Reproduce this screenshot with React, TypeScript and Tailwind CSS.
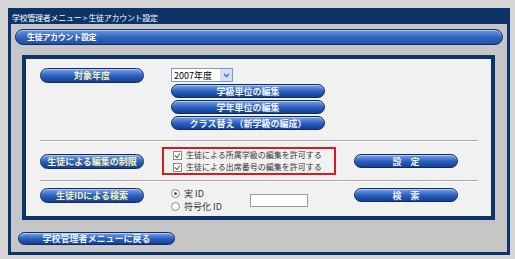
import { useState } from "react";

const FONT = { fontFamily: '"Noto Sans CJK JP", "Noto Sans", sans-serif' };

const pill =
  "flex items-center justify-center rounded-full border border-[#0b2c66] bg-linear-to-b from-[#7aa4e6] via-[#2c62c2] to-[#173f8e] shadow-[inset_0_1px_0_rgba(255,255,255,0.45)] text-[9px] leading-none font-bold whitespace-nowrap";

function Label({ children }: { children: React.ReactNode }) {
  return <div className={`${pill} h-[15px] w-[104px] shrink-0 text-[#f5f2b8]`}>{children}</div>;
}

function Btn({ children, w = "w-[154px] h-[14px]" }: { children: React.ReactNode; w?: string }) {
  return <button className={`${pill} ${w} text-[#eef3ff]`}>{children}</button>;
}

function Check() {
  return (
    <span className="mr-[4px] flex h-[9px] w-[9px] shrink-0 items-center justify-center border border-[#8a8a8a] bg-white">
      <svg width="7" height="7" viewBox="0 0 7 7">
        <path d="M1 3.5 L3 5.5 L6 1.5" stroke="#3a8a3a" strokeWidth="1.2" fill="none" />
      </svg>
    </span>
  );
}

function Radio({ on }: { on: boolean }) {
  return (
    <span className="mr-[4px] flex h-[9px] w-[9px] shrink-0 items-center justify-center rounded-full border border-[#8a8a8a] bg-white">
      {on && <span className="h-[3px] w-[3px] rounded-full bg-[#2a7a2a]" />}
    </span>
  );
}

function Sep() {
  return <div className="h-[2px] border-t border-b border-t-[#a9a9a9] border-b-white" />;
}

export default function App() {
  const [mode, setMode] = useState("real");
  const [searchId, setSearchId] = useState("");

  return (
    <div className="h-[259px] w-[515px] bg-[#d6d6d6] pl-[8px] pt-[8px]" style={FONT}>
      <div className="flex h-[247px] w-[502px] flex-col border-[3px] border-[#0c3468] bg-[#c6c6c6]">
        <div className="flex h-[13px] items-center bg-[#0c3468] pl-[1px] text-[8px] leading-none tracking-[-0.3px] whitespace-nowrap text-white">
          学校管理者メニュー &gt; 生徒アカウント設定
        </div>

        <div className="mx-[4px] mt-[5px] flex h-[16px] items-center rounded-full border border-[#0b2c66] bg-linear-to-b from-[#6a98e2] via-[#3366c4] to-[#23509f] pl-[11px] text-[8px] leading-none font-bold tracking-[-0.3px] text-white shadow-[inset_0_1px_0_rgba(255,255,255,0.5)]">
          生徒アカウント設定
        </div>

        <div className="ml-[11px] mr-[12px] mt-[10px] flex h-[165px] flex-col border-4 border-[#0c3468] bg-[#f1f1f1] pl-[14px] pr-[13px]">
          {/* 対象年度 */}
          <div className="flex h-[81px] items-start pt-[9px]">
            <Label>対象年度</Label>
            <div className="ml-[27px] flex flex-col gap-[2px]">
              <div className="flex h-[14px] w-[62px] items-center border border-[#7f9db9] bg-white text-[9px] leading-none text-black">
                <span className="flex-1 pl-[2px]">2007年度</span>
                <span className="flex h-[12px] w-[12px] items-center justify-center bg-[#d4e0f6]">
                  <svg width="7" height="5" viewBox="0 0 7 5">
                    <path d="M1 1 L3.5 3.5 L6 1" stroke="#4d6aa8" strokeWidth="1.3" fill="none" />
                  </svg>
                </span>
              </div>
              <Btn>学級単位の編集</Btn>
              <Btn>学年単位の編集</Btn>
              <Btn>クラス替え（新学級の編成）</Btn>
            </div>
          </div>
          <Sep />

          {/* 編集の制限 */}
          <div className="flex h-[38px] items-center">
            <Label>生徒による編集の制限</Label>
            <div className="ml-[18px] flex h-[28px] w-[174px] flex-col justify-center border-2 border-[#d81c1c] pl-[9px] text-[8px] leading-[12px] whitespace-nowrap text-[#333]">
              <label className="flex items-center"><Check />生徒による所属学級の編集を許可する</label>
              <label className="flex items-center"><Check />生徒による出席番号の編集を許可する</label>
            </div>
            <Btn w="ml-[18px] w-[104px] h-[14px]">設　定</Btn>
          </div>
          <Sep />

          {/* IDによる検索 */}
          <div className="flex h-[33px] items-start pt-[5px]">
            <div className="pt-[1px]">
              <Label>生徒IDによる検索</Label>
            </div>
            <div className="ml-[27px] flex w-[165px] items-center">
              <div className="flex w-[79px] flex-col text-[9px] leading-[13px] text-[#333]">
                <label className="flex items-center" onClick={() => setMode("real")}><Radio on={mode === "real"} />実 ID</label>
                <label className="flex items-center" onClick={() => setMode("enc")}><Radio on={mode === "enc"} />符号化 ID</label>
              </div>
              <input
                value={searchId}
                onChange={(e) => setSearchId(e.target.value)}
                className="h-[13px] w-[58px] border border-[#9a9a9a] bg-white text-[10px] outline-none"
              />
            </div>
            <div className="pt-[1px]">
              <Btn w="ml-[18px] w-[104px] h-[14px]">検　索</Btn>
            </div>
          </div>
        </div>

        <div className="ml-[7px] mt-[12px]">
          <Btn w="w-[157px] h-[13px]">学校管理者メニューに戻る</Btn>
        </div>
      </div>
    </div>
  );
}
